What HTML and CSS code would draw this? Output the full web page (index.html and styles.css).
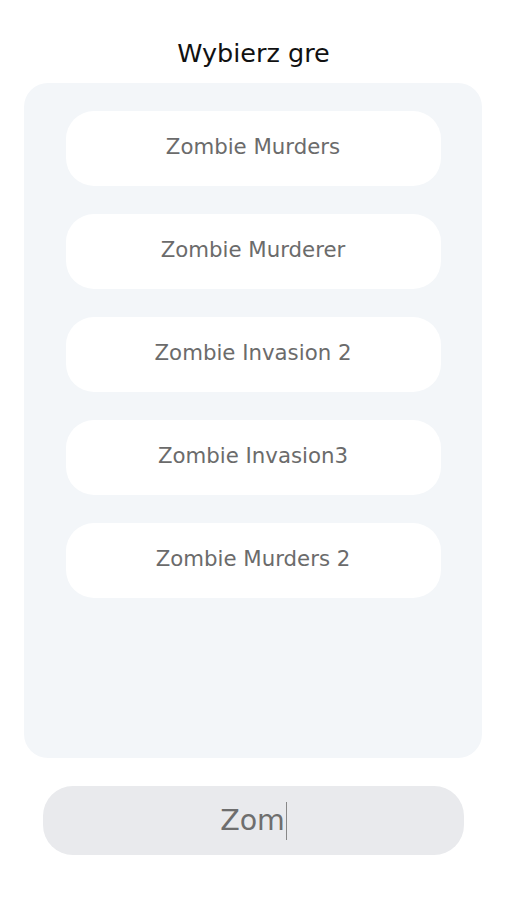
FILE: index.html
```html
<!DOCTYPE html>
<html lang="pl">
<head>
<meta charset="utf-8">
<link rel="stylesheet" href="styles.css">
</head>
<body>
<div class="screen">
  <h1 class="title">Wybierz gre</h1>
  <div class="panel">
    <div class="item">Zombie Murders</div>
    <div class="item">Zombie Murderer</div>
    <div class="item">Zombie Invasion 2</div>
    <div class="item">Zombie Invasion3</div>
    <div class="item">Zombie Murders 2</div>
  </div>
  <div class="search"><span class="typed">Zom</span><span class="caret"></span></div>
</div>
</body>
</html>
```
FILE: styles.css
```css
* { box-sizing: border-box; }
html, body { margin: 0; padding: 0; background: #ffffff; }
body { font-family: "DejaVu Sans", "Liberation Sans", sans-serif; }
.screen {
  width: 507px;
  height: 900px;
  display: flex;
  flex-direction: column;
  align-items: center;
}
.title {
  margin: 36px 0 0;
  height: 34px;
  font-size: 25.5px;
  font-weight: normal;
  color: #111111;
  line-height: 34px;
}
.panel {
  margin-top: 13px;
  width: 458px;
  height: 675px;
  align-self: flex-start;
  margin-left: 24px;
  background: #f3f6f9;
  border-radius: 24px;
  padding-top: 28px;
  display: flex;
  flex-direction: column;
  align-items: center;
  gap: 28px;
}
.item {
  width: 375px;
  height: 75px;
  background: #ffffff;
  border-radius: 28px;
  display: flex;
  align-items: center;
  justify-content: center;
  padding-bottom: 5px;
  font-size: 21.3px;
  color: #6b6b6b;
}
.search {
  margin-top: 28px;
  width: 421px;
  height: 69px;
  align-self: flex-start;
  margin-left: 43px;
  background: #e9eaed;
  border-radius: 30px;
  display: flex;
  align-items: center;
  justify-content: center;
  font-size: 28.5px;
  color: #6e6e6e;
}
.caret {
  display: inline-block;
  width: 1px;
  height: 38px;
  background: #888888;
  margin-left: 1px;
}
```
